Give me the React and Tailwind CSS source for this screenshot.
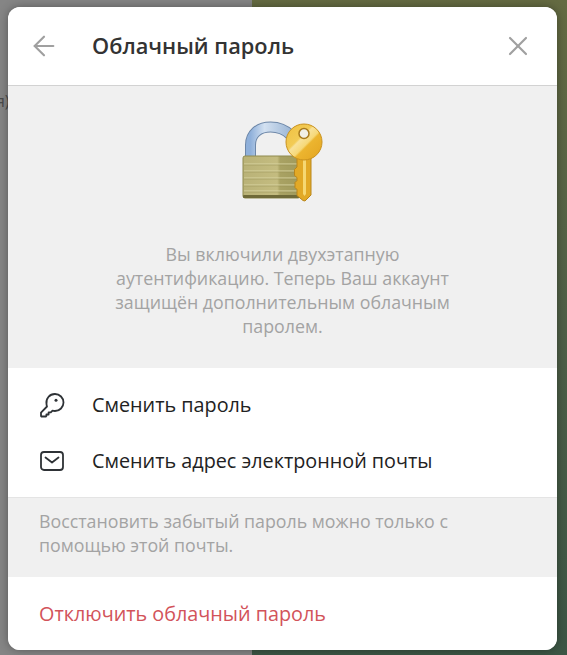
import React from 'react';
import { ArrowLeft, X } from 'lucide-react';

const LockIcon = () => (
  <svg width="90" height="90" viewBox="238 118 90 90" className="block">
    <defs>
      <linearGradient id="shackle" x1="0" y1="0" x2="1" y2="0">
        <stop offset="0" stopColor="#8fb0da" />
        <stop offset="0.35" stopColor="#d3e1f1" />
        <stop offset="1" stopColor="#9db7d6" />
      </linearGradient>
      <linearGradient id="body" x1="0" y1="0" x2="1" y2="0">
        <stop offset="0" stopColor="#b9b277" />
        <stop offset="0.6" stopColor="#c4bc80" />
        <stop offset="0.65" stopColor="#a9a263" />
        <stop offset="1" stopColor="#a09a5c" />
      </linearGradient>
      <linearGradient id="keyhead" x1="0" y1="0" x2="1" y2="1">
        <stop offset="0" stopColor="#f0c040" />
        <stop offset="0.38" stopColor="#f2cb55" />
        <stop offset="0.42" stopColor="#f8e29a" />
        <stop offset="0.56" stopColor="#f6d878" />
        <stop offset="0.6" stopColor="#ecb52f" />
        <stop offset="1" stopColor="#e3a420" />
      </linearGradient>
    </defs>
    <path d="M250.500 157v-12c0-11 8-18 20-18 8 0 14 2 20 8" fill="none" stroke="#6d87a8" strokeWidth="11" />
    <path d="M250.500 157v-12c0-11 8-18 20-18 8 0 14 2 20 8" fill="none" stroke="url(#shackle)" strokeWidth="9" />
    <rect x="243" y="156" width="57" height="42" rx="2" fill="url(#body)" stroke="#8f8a4e" strokeWidth="1" />
    <rect x="243" y="195" width="57" height="3" rx="1" fill="#6f6a38" />
    <path d="M244 164h55M244 171h55M244 178h55M244 185h55M244 191h55" stroke="#d9d4a2" strokeWidth="1" />
    <path d="M244 165h55M244 172h55M244 179h55M244 186h55M244 192h55" stroke="#938d50" strokeWidth="1" opacity="0.45" />
    <path d="M297 157v10l-2.500 2.500v6l2.500 2v3l-2 2v5l2 2v6l6 5 2 .5 6-6v-38z" fill="#e2a926" stroke="#b9861c" strokeWidth="1" />
    <path d="M303 160h3v34l-1.500 2-1.500-2z" fill="#f6d873" />
    <circle cx="304" cy="142" r="18" fill="url(#keyhead)" stroke="#c9921f" strokeWidth="1" />
    <circle cx="304" cy="133.500" r="5" fill="#f1efe4" stroke="#a87a1c" strokeWidth="1.500" />
  </svg>
);

const KeyIcon = () => (
  <svg width="26" height="26" viewBox="0 0 26 26" fill="none" stroke="#2e3236" strokeWidth="1.8" strokeLinejoin="round" strokeLinecap="round">
    <path d="M16 2a8.500 8.500 0 0 1 0 17c-.9 0-1.700-.1-2.500-.4l-1.700 1.700H9.600v2.200H7.400v1.400l-.6.600H2.800a.8.800 0 0 1-.8-.8v-3.100l6-6.100c-.3-.8-.5-1.600-.5-2.500A8.500 8.500 0 0 1 16 2z" />
    <circle cx="17" cy="8.200" r="1.500" fill="#2e3236" stroke="none" />
  </svg>
);

const MailIcon = () => (
  <svg width="26" height="26" viewBox="0 0 26 26" fill="none" stroke="#2e3236" strokeWidth="1.8" strokeLinejoin="round" strokeLinecap="round">
    <rect x="2" y="4" width="22" height="18" rx="3" />
    <path d="M6.500 9.500l6.500 5 6.500-5" />
  </svg>
);

const Row = ({ icon, text }) => (
  <div className="flex h-14 items-center">
    <div className="flex w-[84px] shrink-0 justify-center pl-[3px]">{icon}</div>
    <span className="text-[19.8px] text-[#222222]">{text}</span>
  </div>
);

export default function App() {
  return (
    <div className="relative h-[655px] w-[567px] overflow-hidden font-['Open_Sans',sans-serif]">
      <div className="flex h-full">
        <div className="w-[252px] bg-[#858585]">
          <p className="mt-[89px] -ml-1 text-base text-[#4b4b4b]">я)</p>
        </div>
        <div className="flex-1 bg-gradient-to-b from-[#656b42] via-[#4f5f47] to-[#3c5645]" />
      </div>

      <div className="absolute left-2 top-[7px] flex h-[643px] w-[549px] flex-col overflow-hidden rounded-xl bg-[#f0f0f0] shadow-[0_0_10px_rgba(0,0,0,0.35)]">
        <header className="flex h-[79px] shrink-0 items-center border-b border-[#d2d2d2] bg-white">
          <ArrowLeft className="ml-[20px] h-[32px] w-[32px] text-[#a0a0a0]" strokeWidth={1.6} />
          <h1 className="ml-8 flex-1 text-[21.8px] font-semibold text-[#333333]">Облачный пароль</h1>
          <X className="mr-[23px] h-[32px] w-[32px] text-[#a0a0a0]" strokeWidth={1.6} />
        </header>

        <section className="flex h-[282px] shrink-0 flex-col items-center pt-[32px]">
          <LockIcon />
          <p className="mt-[34px] w-[380px] text-center text-[17.8px] leading-6 text-[#a3a3a3]">
            Вы включили двухэтапную аутентификацию. Теперь Ваш аккаунт защищён дополнительным облачным паролем.
          </p>
        </section>

        <section className="h-[130px] shrink-0 border-b border-[#e4e4e4] bg-white pt-[9px]">
          <Row icon={<KeyIcon />} text="Сменить пароль" />
          <Row icon={<MailIcon />} text="Сменить адрес электронной почты" />
        </section>

        <p className="h-[79px] shrink-0 pl-[31px] pr-8 pt-[11px] text-[17.8px] leading-6 text-[#a3a3a3]">
          Восстановить забытый пароль можно только с помощью этой почты.
        </p>

        <div className="flex flex-1 items-center bg-white pl-[31px] pr-8">
          <span className="text-[19.8px] text-[#d2535a]">Отключить облачный пароль</span>
        </div>
      </div>
    </div>
  );
}
